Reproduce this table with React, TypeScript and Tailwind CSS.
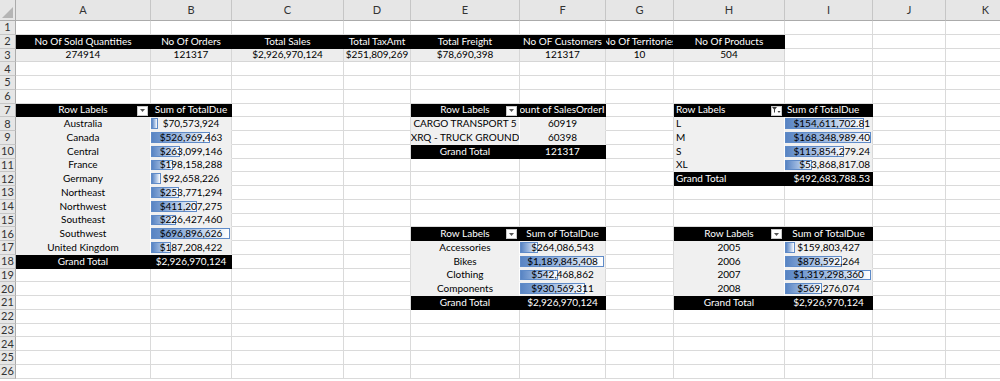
import React from 'react';

type Cell = {
  text?: string;
  kind?: 'head' | 'body' | 'label' | 'kpi';
  align?: 'l' | 'c' | 'r';
  bar?: number;
  icon?: 'dd' | 'filter';
};

const cols = ['A', 'B', 'C', 'D', 'E', 'F', 'G', 'H', 'I', 'J', 'K'];

const cells: Record<string, Cell> = {};
const put = (r: number, c: number, cell: Cell) => {
  cells[`${r},${c}`] = cell;
};

// KPI strip, rows 2-3
[
  ['No Of Sold Quantities', '274914'],
  ['No Of Orders', '121317'],
  ['Total Sales', '$2,926,970,124'],
  ['Total TaxAmt', '$251,809,269'],
  ['Total Freight', '$78,690,398'],
  ['No OF Customers', '121317'],
  ['No Of Territories', '10'],
  ['No Of Products', '504'],
].forEach(([h, v], i) => {
  put(2, i + 1, { text: h, kind: 'head', align: 'c' });
  put(3, i + 1, { text: v, kind: 'kpi', align: 'c' });
});

type Pivot = {
  row: number;
  col: number;
  value: string;
  rows: [string, string, number?][];
  total: string;
  align: 'l' | 'c';
  icon: 'dd' | 'filter';
  bars: boolean;
};

const pivots: Pivot[] = [
  {
    row: 7, col: 1, value: 'Sum of TotalDue', align: 'c', icon: 'dd', bars: true,
    rows: [
      ['Australia', '$70,573,924', 70573924],
      ['Canada', '$526,969,463', 526969463],
      ['Central', '$263,099,146', 263099146],
      ['France', '$198,158,288', 198158288],
      ['Germany', '$92,658,226', 92658226],
      ['Northeast', '$253,771,294', 253771294],
      ['Northwest', '$411,207,275', 411207275],
      ['Southeast', '$226,427,460', 226427460],
      ['Southwest', '$696,896,626', 696896626],
      ['United Kingdom', '$187,208,422', 187208422],
    ],
    total: '$2,926,970,124',
  },
  {
    row: 7, col: 5, value: 'Count of SalesOrderID', align: 'c', icon: 'dd', bars: false,
    rows: [
      ['CARGO TRANSPORT 5', '60919'],
      ['XRQ - TRUCK GROUND', '60398'],
    ],
    total: '121317',
  },
  {
    row: 7, col: 8, value: 'Sum of TotalDue', align: 'l', icon: 'filter', bars: true,
    rows: [
      ['L', '$154,611,702.81', 154611702.81],
      ['M', '$168,348,989.40', 168348989.4],
      ['S', '$115,854,279.24', 115854279.24],
      ['XL', '$53,868,817.08', 53868817.08],
    ],
    total: '$492,683,788.53',
  },
  {
    row: 16, col: 5, value: 'Sum of TotalDue', align: 'c', icon: 'dd', bars: true,
    rows: [
      ['Accessories', '$264,086,543', 264086543],
      ['Bikes', '$1,189,845,408', 1189845408],
      ['Clothing', '$542,468,862', 542468862],
      ['Components', '$930,569,311', 930569311],
    ],
    total: '$2,926,970,124',
  },
  {
    row: 16, col: 8, value: 'Sum of TotalDue', align: 'c', icon: 'dd', bars: true,
    rows: [
      ['2005', '$159,803,427', 159803427],
      ['2006', '$878,592,264', 878592264],
      ['2007', '$1,319,298,360', 1319298360],
      ['2008', '$569,276,074', 569276074],
    ],
    total: '$2,926,970,124',
  },
];

pivots.forEach((p) => {
  const max = Math.max(...p.rows.map((r) => r[2] ?? 0));
  const valAlign = p.align === 'l' ? 'r' : 'c';
  put(p.row, p.col, { text: 'Row Labels', kind: 'head', align: p.align, icon: p.icon });
  put(p.row, p.col + 1, { text: p.value, kind: 'head', align: p.align });
  p.rows.forEach(([label, val, n], i) => {
    put(p.row + 1 + i, p.col, { text: label, kind: 'label', align: p.align });
    put(p.row + 1 + i, p.col + 1, {
      text: val,
      kind: 'body',
      align: valAlign,
      bar: p.bars && n ? n / max : undefined,
    });
  });
  const tr = p.row + 1 + p.rows.length;
  put(tr, p.col, { text: 'Grand Total', kind: 'head', align: p.align });
  put(tr, p.col + 1, { text: p.total, kind: 'head', align: valAlign });
});

function DropIcon({ filter }: { filter: boolean }) {
  return (
    <div className="absolute right-[2px] top-[2px] w-[11px] h-[10px] bg-white border border-[#c8c8c8] flex items-center justify-center">
      {filter ? (
        <svg width="9" height="7" viewBox="0 0 9 7">
          <path d="M0 0h5L3 2.5V6L2 5V2.5Z" fill="#404040" />
          <path d="M5.5 4h3L7 6Z" fill="#404040" />
        </svg>
      ) : (
        <svg width="5" height="3" viewBox="0 0 5 3">
          <path d="M0 0h5L2.5 3Z" fill="#555" />
        </svg>
      )}
    </div>
  );
}

function GridCell({ r, c }: { r: number; c: number }) {
  const cell = cells[`${r},${c}`];
  const kind = cell?.kind;
  let cls = 'relative flex items-center whitespace-nowrap overflow-hidden text-[10px] leading-[13px] border-r border-b ';
  if (kind === 'head') cls += 'bg-black text-white border-black ';
  else if (kind === 'kpi') cls += 'bg-[#ededed] text-black border-[#d6d6d6] ';
  else if (kind === 'label') cls += 'bg-[#f0f0f0] text-black border-r-white border-b-[#f0f0f0] ';
  else if (kind === 'body') cls += 'bg-[#f0f0f0] text-black border-r-[#d9d9d9] border-b-[#f0f0f0] ';
  else cls += 'bg-white border-[#dadada] ';
  if (cell?.align === 'c') cls += 'justify-center ';
  else if (cell?.align === 'r') cls += 'justify-end pr-[2px] ';
  else cls += 'justify-start pl-[2px] ';

  return (
    <div className={cls}>
      {cell?.bar !== undefined && (
        <div
          className="absolute left-0 top-[1px] bottom-[1px] bg-gradient-to-r from-[#5884c3] via-[#a3bde2] to-white border border-[#5f8bc8]"
          style={{ width: `calc(${(cell.bar * 100).toFixed(2)}% - 1px)` }}
        />
      )}
      {cell?.text && <span className="relative">{cell.text}</span>}
      {cell?.icon && <DropIcon filter={cell.icon === 'filter'} />}
    </div>
  );
}

export default function App() {
  const rows = Array.from({ length: 26 }, (_, i) => i + 1);
  return (
    <div
      className="w-[1000px] h-[381px] overflow-hidden bg-white grid grid-cols-[16px_135px_81px_112px_67px_109px_86px_68px_111px_88px_73px_80px] grid-rows-[21px_repeat(26,13.75px)]"
      style={{ fontFamily: 'Lato, "Open Sans", sans-serif' }}
    >
      <div className="relative bg-[#e6e6e6] border-r border-b border-[#ababab]">
        <div className="absolute right-[2px] bottom-[2px] w-0 h-0 border-l-[11px] border-l-transparent border-b-[11px] border-b-[#b5b5b5]" />
      </div>
      {cols.map((c) => (
        <div
          key={c}
          className="bg-[#e6e6e6] border-r border-r-[#c6c6c6] border-b border-b-[#ababab] flex items-center justify-center text-[11px] text-[#333]"
        >
          {c}
        </div>
      ))}
      {rows.map((r) => (
        <React.Fragment key={r}>
          <div className="bg-[#e6e6e6] border-r border-r-[#ababab] border-b border-b-[#c6c6c6] flex items-center justify-center text-[11px] leading-[12px] text-[#333]">
            {r}
          </div>
          {cols.map((_, ci) => (
            <GridCell key={ci} r={r} c={ci + 1} />
          ))}
        </React.Fragment>
      ))}
    </div>
  );
}
